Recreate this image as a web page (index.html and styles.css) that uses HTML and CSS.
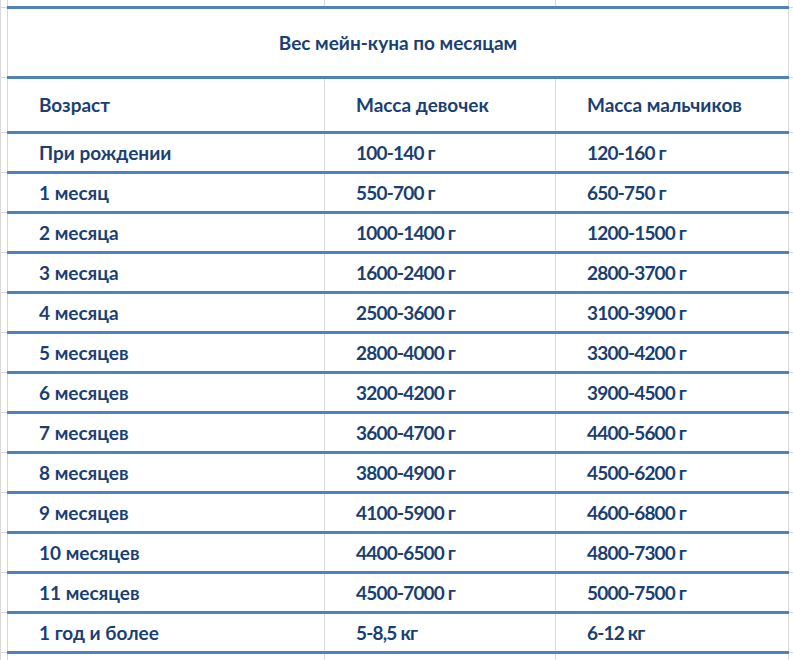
FILE: index.html
```html
<!DOCTYPE html>
<html lang="ru">
<head>
<meta charset="utf-8">
<title>Вес мейн-куна по месяцам</title>
<link rel="stylesheet" href="styles.css">
</head>
<body>
<table class="sheet">
  <colgroup>
    <col class="c0"><col class="c1"><col class="c2"><col class="c3"><col class="c4">
  </colgroup>
  <tr class="r-top"><td></td><td></td><td></td><td></td><td></td></tr>
  <tr class="r-title"><td class="g"></td><td class="d title" colspan="3">Вес мейн-куна по месяцам</td><td class="g"></td></tr>
  <tr class="r-head"><td class="g"></td><td class="d">Возраст</td><td class="d">Масса девочек</td><td class="d">Масса мальчиков</td><td class="g"></td></tr>
  <tr class="r"><td class="g"></td><td class="d">При рождении</td><td class="d">100-140 г</td><td class="d">120-160 г</td><td class="g"></td></tr>
  <tr class="r"><td class="g"></td><td class="d">1 месяц</td><td class="d">550-700 г</td><td class="d">650-750 г</td><td class="g"></td></tr>
  <tr class="r"><td class="g"></td><td class="d">2 месяца</td><td class="d">1000-1400 г</td><td class="d">1200-1500 г</td><td class="g"></td></tr>
  <tr class="r"><td class="g"></td><td class="d">3 месяца</td><td class="d">1600-2400 г</td><td class="d">2800-3700 г</td><td class="g"></td></tr>
  <tr class="r"><td class="g"></td><td class="d">4 месяца</td><td class="d">2500-3600 г</td><td class="d">3100-3900 г</td><td class="g"></td></tr>
  <tr class="r"><td class="g"></td><td class="d">5 месяцев</td><td class="d">2800-4000 г</td><td class="d">3300-4200 г</td><td class="g"></td></tr>
  <tr class="r"><td class="g"></td><td class="d">6 месяцев</td><td class="d">3200-4200 г</td><td class="d">3900-4500 г</td><td class="g"></td></tr>
  <tr class="r"><td class="g"></td><td class="d">7 месяцев</td><td class="d">3600-4700 г</td><td class="d">4400-5600 г</td><td class="g"></td></tr>
  <tr class="r"><td class="g"></td><td class="d">8 месяцев</td><td class="d">3800-4900 г</td><td class="d">4500-6200 г</td><td class="g"></td></tr>
  <tr class="r"><td class="g"></td><td class="d">9 месяцев</td><td class="d">4100-5900 г</td><td class="d">4600-6800 г</td><td class="g"></td></tr>
  <tr class="r"><td class="g"></td><td class="d">10 месяцев</td><td class="d">4400-6500 г</td><td class="d">4800-7300 г</td><td class="g"></td></tr>
  <tr class="r"><td class="g"></td><td class="d">11 месяцев</td><td class="d">4500-7000 г</td><td class="d">5000-7500 г</td><td class="g"></td></tr>
  <tr class="r"><td class="g"></td><td class="d">1 год и более</td><td class="d">5-8,5 кг</td><td class="d">6-12 кг</td><td class="g"></td></tr>
  <tr class="r-bottom"><td></td><td></td><td></td><td></td><td></td></tr>
</table>
</body>
</html>
```

FILE: styles.css
```css
html, body {
  margin: 0;
  padding: 0;
  background: #ffffff;
  overflow: hidden;
}

.sheet {
  border-collapse: collapse;
  table-layout: fixed;
  width: 800px;
  font-family: Lato, "Open Sans", sans-serif;
  font-weight: 700;
  font-size: 19px;
  line-height: 20px;
  color: #1a3f73;
}

.c0 { width: 7px; }
.c1 { width: 317px; }
.c2 { width: 231px; }
.c3 { width: 233px; }
.c4 { width: 12px; }

.sheet td {
  border: 1px solid #d9d9d9;
  padding: 0;
  vertical-align: middle;
  white-space: nowrap;
  overflow: hidden;
}

.sheet td.d {
  border-top: 3px solid #4f81bd;
  border-bottom: 3px solid #4f81bd;
  padding-left: 31px;
}

.sheet .r td.d + td.d {
  letter-spacing: -0.8px;
}

.sheet td.title {
  text-align: center;
  padding-left: 0;
}

.sheet .r-top td { border-top: none; height: 6px; }
.r-title td { height: 67px; }
.r-head td { height: 52px; }
.r td { height: 37px; }
.r-bottom td { height: 20px; }
```
